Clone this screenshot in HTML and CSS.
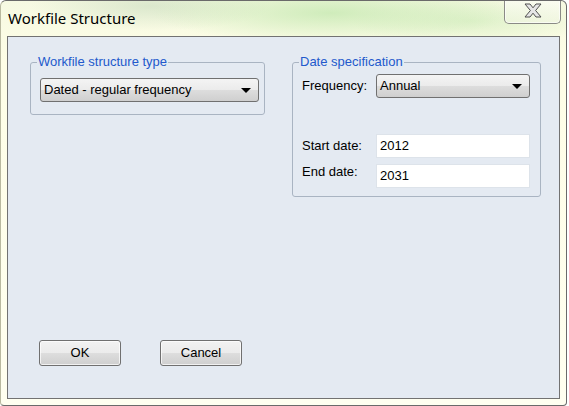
FILE: index.html
```html
<!DOCTYPE html>
<html>
<head>
<meta charset="utf-8">
<link rel="stylesheet" href="styles.css">
</head>
<body>
<div class="window">
  <div class="titlebar">
    <span class="title">Workfile Structure</span>
    <div class="close">
      <svg width="22" height="15" viewBox="0 0 22 15">
        <path d="M3 1 L8 1 L11 4.8 L14 1 L19 1 L13.6 7.5 L19 14 L14 14 L11 10.2 L8 14 L3 14 L8.4 7.5 Z" fill="#e6e6e6" stroke="#505050" stroke-width="1" stroke-linejoin="round"/>
      </svg>
    </div>
  </div>
  <div class="panel">
    <div class="groups">
      <fieldset class="group g1">
        <legend>Workfile structure type</legend>
        <div class="combo">Dated - regular frequency<span class="arrow"></span></div>
      </fieldset>
      <fieldset class="group g2">
        <legend>Date specification</legend>
        <div class="form">
          <span class="label">Frequency:</span>
          <div class="combo">Annual<span class="arrow"></span></div>
          <span class="label">Start date:</span>
          <div class="field">2012</div>
          <span class="label end">End date:</span>
          <div class="field">2031</div>
        </div>
      </fieldset>
    </div>
    <div class="buttons">
      <div class="btn">OK</div>
      <div class="btn">Cancel</div>
    </div>
  </div>
</div>
</body>
</html>
```
FILE: styles.css
```css
html, body {
  margin: 0;
  padding: 0;
  background: #ffffff;
}
body {
  font-family: "Liberation Sans", Arial, sans-serif;
  font-size: 13px;
  color: #000;
}
.window {
  box-sizing: border-box;
  width: 567px;
  height: 406px;
  border: 1px solid #6a6a6a;
  border-left-color: #b9b9a0;
  border-radius: 6px 6px 4px 4px;
  background:
    radial-gradient(ellipse 180px 30px at 330px 12px, rgba(190, 230, 170, 0.7), rgba(190, 230, 170, 0) 100%),
    radial-gradient(ellipse 120px 25px at 150px 5px, rgba(200, 220, 190, 0.6), rgba(200, 220, 190, 0) 100%),
    radial-gradient(ellipse 120px 25px at 470px 20px, rgba(205, 235, 185, 0.6), rgba(205, 235, 185, 0) 100%),
    linear-gradient(#f6f9e2, #fefee6 60px, #fffff0);
  display: flex;
  flex-direction: column;
  overflow: hidden;
}
.titlebar {
  height: 35px;
  display: flex;
  align-items: flex-start;
  flex-shrink: 0;
}
.title {
  font-family: "Noto Sans", "Open Sans", sans-serif;
  font-size: 15px;
  margin: 7px 0 0 7px;
  color: #000;
}
.close {
  margin: -1px 5px 0 auto;
  width: 57px;
  height: 24px;
  box-sizing: border-box;
  border: 1px solid #8a8a86;
  border-top: none;
  border-radius: 0 0 5px 5px;
  background: linear-gradient(rgba(255,255,255,0.5), rgba(240,245,225,0.6));
  box-shadow: inset 0 0 0 1px rgba(255,255,255,0.6);
  display: flex;
  align-items: center;
  justify-content: center;
  padding-bottom: 2px;
}
.panel {
  margin: 0 0 0 6px;
  width: 553px;
  height: 363px;
  box-sizing: border-box;
  border: 1px solid #727272;
  background: #e4eaf2;
  display: flex;
  flex-direction: column;
}
.groups {
  display: flex;
  align-items: flex-start;
  padding: 18px 0 0 22px;
  gap: 27px;
}
.group {
  margin: 0;
  box-sizing: border-box;
  border: 1px solid #a9b4c2;
  border-radius: 3px;
  padding: 0;
  min-width: 0;
}
.group legend {
  color: #2259cc;
  padding: 0 1px;
  margin-left: -3px;
  line-height: 14px;
}
.g1 {
  width: 235px;
  padding: 9px 5px 12px 9px;
}
.g2 {
  width: 249px;
  padding: 5px 10px 8px 9px;
}
.combo {
  position: relative;
  box-sizing: border-box;
  height: 24px;
  border: 1px solid #707070;
  border-radius: 3px;
  background: linear-gradient(#f4f4f4, #ebebeb 50%, #dddddd 51%, #cfcfcf);
  padding: 0 0 0 3px;
  line-height: 22px;
}
.arrow {
  position: absolute;
  right: 7px;
  top: 9px;
  width: 0;
  height: 0;
  border-left: 5px solid transparent;
  border-right: 5px solid transparent;
  border-top: 5px solid #000;
}
.form {
  display: grid;
  grid-template-columns: 74px 154px;
  grid-template-rows: 60px 30px 24px;
  align-items: start;
}
.label {
  line-height: 24px;
}
.label.end {
  margin-top: -4px;
}
.field {
  box-sizing: border-box;
  height: 24px;
  background: #fff;
  border: 1px solid #dde3ea;
  padding-left: 3px;
  line-height: 22px;
}
.buttons {
  margin-top: auto;
  display: flex;
  gap: 39px;
  padding: 0 0 32px 31px;
}
.btn {
  box-sizing: border-box;
  width: 82px;
  height: 26px;
  border: 1px solid #707070;
  border-radius: 3px;
  background: linear-gradient(#f2f2f2, #ebebeb 50%, #dddddd 51%, #cfcfcf);
  box-shadow: inset 0 0 0 1px rgba(255,255,255,0.7);
  text-align: center;
  line-height: 24px;
}
```
